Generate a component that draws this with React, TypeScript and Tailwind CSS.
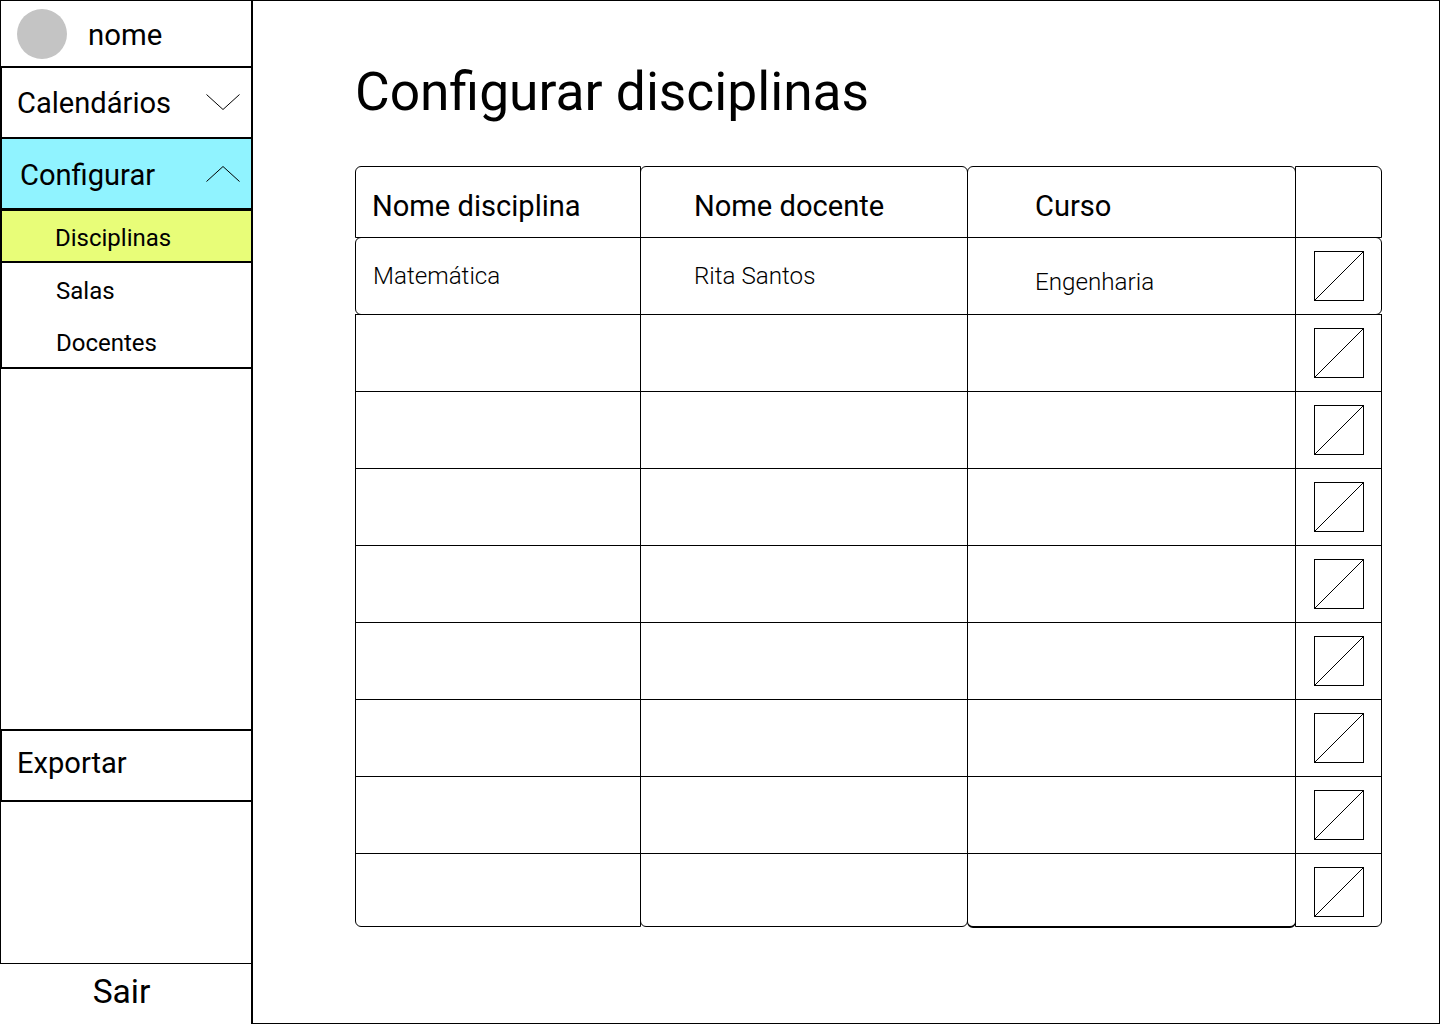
const rows = [0, 1, 2, 3, 4, 5, 6, 7, 8];

function Chevron({ up }: { up?: boolean }) {
  return (
    <svg className="block" width="34" height="16" viewBox="0 0 34 16" fill="none" stroke="#000" strokeWidth="1">
      <path d={up ? "M0.5 15.5 L17 0.5 L33.5 15.5" : "M0.5 0.5 L17 15.5 L33.5 0.5"} />
    </svg>
  );
}

function ImagePlaceholder() {
  return (
    <svg width="51" height="51" viewBox="0 0 51 51" fill="none" stroke="#000" strokeWidth="1">
      <rect x="0.5" y="0.5" width="49" height="49" />
      <path d="M0 50 L50 0" />
    </svg>
  );
}

function Sidebar() {
  return (
    <aside className="flex w-[253px] shrink-0 flex-col border-r-2 border-black">
      <div className="flex flex-1 flex-col border-l border-t border-b border-black">
        {/* User */}
        <div className="flex h-[65px] items-center pl-4">
          <div className="h-[50px] w-[50px] rounded-full bg-[#c4c4c4]" />
          <span className="ml-[21px] pt-[4px] text-[29.33px] leading-none">nome</span>
        </div>

        {/* Calendarios */}
        <div className="-ml-px -mr-[2px] flex h-[73px] items-center justify-between border-2 border-black pl-[15px] pr-[11px]">
          <span className="pt-[2px] text-[29.1px] leading-none">Calendários</span>
          <span className="pb-px">
            <Chevron />
          </span>
        </div>

        {/* Configurar */}
        <div className="-ml-px -mr-[2px] -mt-[2px] flex h-[73px] items-center justify-between border-2 border-black bg-[#90f3ff] pl-[18px] pr-[11px]">
          <span className="pt-[4px] text-[29.1px] leading-none">Configurar</span>
          <span className="pt-px">
            <Chevron up />
          </span>
        </div>

        <div className="-ml-px -mr-[2px] -mt-px flex h-[160px] flex-col border-2 border-black">
          <div className="flex h-[52px] items-center border-b-2 border-black bg-[#e8fd78] pl-[53px] pt-[4px] text-[24px] leading-none">
            Disciplinas
          </div>
          <div className="flex h-[55px] items-center pl-[54px] pt-[1px] text-[24px] leading-none">Salas</div>
          <div className="flex h-[49px] items-center pl-[54px] text-[24px] leading-none">Docentes</div>
        </div>

        {/* Exportar */}
        <div className="-ml-px -mr-[2px] mt-[360px] flex h-[73px] items-center border-2 border-black pb-[4px] pl-[15px]">
          <span className="text-[29.1px] leading-none">Exportar</span>
        </div>
      </div>

      <div className="flex h-[60px] shrink-0 items-center justify-center pb-[4px] pr-[8px] text-[33.6px] leading-none">
        Sair
      </div>
    </aside>
  );
}

function Table() {
  const cell = "-ml-px -mt-px border border-black";
  return (
    <div className="ml-px grid w-[1026px] grid-cols-[285px_327px_328px_86px] grid-rows-[71px_77px_77px_77px_77px_77px_77px_77px_77px_73px]">
      {/* Header */}
      <div className={`${cell} flex items-center rounded-tl-[6px] pl-4 pt-[9px] text-[29.1px] leading-none`}>Nome disciplina</div>
      <div className={`${cell} flex items-center rounded-t-[6px] pl-[53px] pt-[9px] text-[29.1px] leading-none`}>Nome docente</div>
      <div className={`${cell} flex items-center rounded-t-[6px] pl-[67px] pt-[9px] text-[29.1px] leading-none`}>Curso</div>
      <div className={`${cell} rounded-tr-[6px]`} />

      {rows.map((r) => (
        <div key={r} className="contents">
          <div
            className={`${cell} flex items-center pl-[17px] text-[24.2px] leading-none font-light ${
              r === 0 ? "rounded-l-[6px]" : ""
            } ${r === 8 ? "rounded-bl-[6px]" : ""}`}
          >
            {r === 0 && "Matemática"}
          </div>
          <div
            className={`${cell} flex items-center pl-[53px] text-[24.2px] leading-none font-light ${
              r === 8 ? "rounded-b-[6px]" : ""
            }`}
          >
            {r === 0 && "Rita Santos"}
          </div>
          <div
            className={`${cell} flex items-center pl-[67px] text-[24.2px] leading-none font-light ${
              r === 0 ? "pt-[12px]" : ""
            } ${r === 8 ? "-mb-px rounded-b-[6px] border-b-2" : ""}`}
          >
            {r === 0 && "Engenharia"}
          </div>
          <div
            className={`${cell} pl-[18px] pt-[13px] ${r === 0 ? "rounded-r-[6px]" : ""} ${
              r === 8 ? "rounded-br-[6px]" : ""
            }`}
          >
            <ImagePlaceholder />
          </div>
        </div>
      ))}
    </div>
  );
}

export default function App() {
  return (
    <div className="flex h-[1024px] w-[1440px] overflow-hidden bg-white font-['Roboto',sans-serif] text-black">
      <Sidebar />
      <main className="flex-1 border-y border-r border-black pl-[102px]">
        <h1 className="mt-[61px] mb-[45px] h-[60px] text-[53.33px] leading-[60px] font-normal">Configurar disciplinas</h1>
        <Table />
      </main>
    </div>
  );
}
